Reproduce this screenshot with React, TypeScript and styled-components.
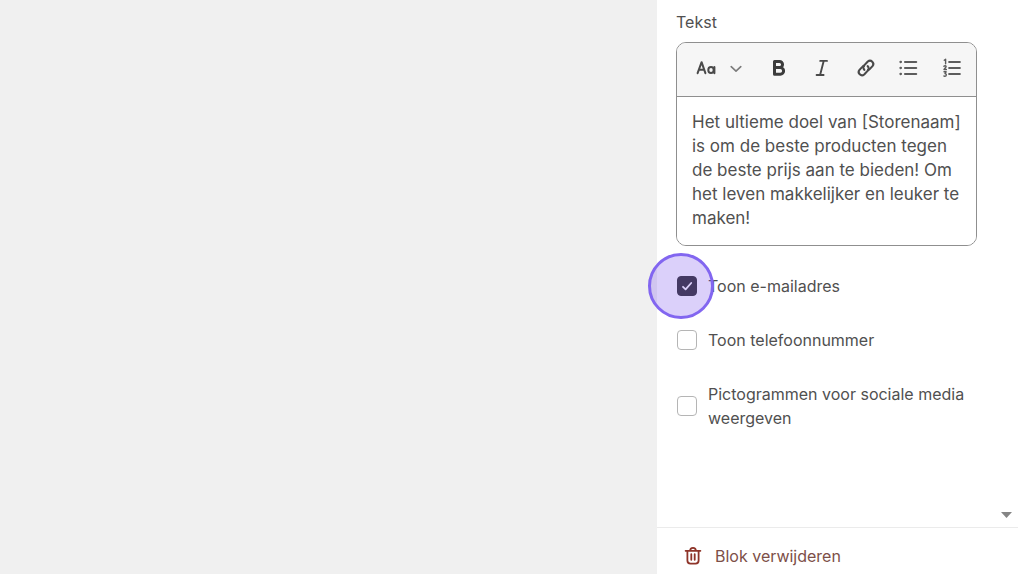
import React from "react";
import styled, { createGlobalStyle } from "styled-components";

const GlobalStyle = createGlobalStyle`
  *, *::before, *::after { box-sizing: border-box; }
  body {
    margin: 0;
    background: #ffffff;
    color: #505050;
    font-family: Inter, "Liberation Sans", sans-serif;
    font-size: 16px;
    line-height: 24px;
  }
  button, textarea, input { font: inherit; color: inherit; }
`;

const Page = styled.div`
  display: flex;
  min-height: 100vh;
  padding: 0 6px 8px 0;
`;

const Preview = styled.main`
  flex: 1;
  background: #f0f0f0;
`;

const Panel = styled.aside`
  flex: 0 0 361px;
  display: flex;
  flex-direction: column;
  background: #ffffff;
`;

const Settings = styled.div`
  flex: 1;
  padding: 10px 41px 0 19px;
`;

const FieldLabel = styled.label`
  display: block;
  margin-bottom: 8px;
`;

const Editor = styled.div`
  border: 1px solid #8f8f8f;
  border-radius: 10px;
  overflow: hidden;
`;

const Toolbar = styled.div`
  display: flex;
  align-items: center;
  justify-content: space-between;
  height: 54px;
  padding: 0 14px 4px 19px;
  background: #f6f6f6;
  border-bottom: 1px solid #8f8f8f;
`;

const ToolButton = styled.button<{ $wide?: boolean }>`
  display: flex;
  align-items: center;
  gap: 14px;
  width: ${(p) => (p.$wide ? "50px" : "20px")};
  padding: 0;
  border: 0;
  background: none;
  color: #4a4a4a;

  svg { display: block; flex: none; }
`;

const EditorText = styled.textarea`
  display: block;
  width: 100%;
  height: 148px;
  padding: 13px 12px 14px 15px;
  border: 0;
  outline: 0;
  resize: none;
  overflow: hidden;
  background: #ffffff;
  font-size: 17px;
`;

const Options = styled.div`
  display: flex;
  flex-direction: column;
  gap: 30px;
  margin-top: 28px;
`;

const Option = styled.label`
  display: flex;
  align-items: center;
  gap: 11px;
  padding-left: 1px;
`;

const BoxHolder = styled.span`
  position: relative;
  display: flex;
  flex: none;
`;

const Checkbox = styled.input`
  appearance: none;
  width: 20px;
  height: 20px;
  margin: 0;
  border: 1px solid #b5b5b5;
  border-radius: 4px;
  background: #ffffff;

  &:checked {
    border-color: #363636;
    background: #363636;
  }
`;

const Tick = styled.svg`
  position: absolute;
  inset: 0;
  pointer-events: none;
`;

const Highlight = styled.span`
  position: absolute;
  top: -23px;
  left: -29px;
  width: 66px;
  height: 66px;
  border: 3px solid #8266f0;
  border-radius: 50%;
  background: rgba(112, 68, 235, 0.25);
  pointer-events: none;
`;

const ScrollHint = styled.div`
  display: flex;
  justify-content: flex-end;
  padding: 0 6px 9px 0;
`;

const Footer = styled.footer`
  padding: 16px 27px 6px;
  border-top: 1px solid #ebebeb;
`;

const DeleteButton = styled.button`
  display: flex;
  align-items: center;
  gap: 13px;
  padding: 0;
  border: 0;
  background: none;
  color: #7d4f48;

  svg { color: #8e3429; }
`;

const stroke = {
  fill: "none",
  stroke: "currentColor",
  strokeLinecap: "round" as const,
  strokeLinejoin: "round" as const,
};

const FormatIcon = () => (
  <svg width="20" height="20" viewBox="0 0 20 20" {...stroke} strokeWidth="2" aria-hidden="true">
    <path d="M1.6 15.2 5.6 4.2 9.4 15.2M3 11.8h5" />
    <ellipse cx="15" cy="12" rx="2.700" ry="3.1" />
    <path d="M18.400 8.900v6.300" />
  </svg>
);

const ChevronIcon = () => (
  <svg width="12" height="20" viewBox="0 0 12 20" {...stroke} stroke="#7c7c7c" strokeWidth="1.6" aria-hidden="true">
    <path d="m1.200 8.600 4.800 4.600 4.800-4.600" />
  </svg>
);

const BoldIcon = () => (
  <svg width="20" height="20" viewBox="0 0 20 20" {...stroke} stroke="#3c3c3c" strokeWidth="3" aria-hidden="true">
    <path d="M5.500 3.500h5a3.050 3.050 0 0 1 0 6.100h-5zM5.500 9.600h5.800a3.300 3.300 0 0 1 0 6.600H5.500z" />
  </svg>
);

const ItalicIcon = () => (
  <svg width="20" height="20" viewBox="0 0 20 20" {...stroke} strokeWidth="1.9" aria-hidden="true">
    <path d="M8.200 2.900h6.800M4.600 17h7M11.700 2.900 8.100 17" />
  </svg>
);

const LinkIcon = () => (
  <svg width="20" height="20" viewBox="0 0 20 20" {...stroke} strokeWidth="2.100" aria-hidden="true">
    <path d="M8.400 11.900a3.200 3.200 0 0 1-.2-4.500l3.600-3.900a3.300 3.300 0 0 1 4.700 4.600l-2.800 3a3.200 3.200 0 0 1-1.700 1" />
    <path d="M11.600 8.100a3.200 3.200 0 0 1 .2 4.500l-3.600 3.900a3.300 3.300 0 0 1-4.700-4.600l2.800-3a3.200 3.200 0 0 1 1.700-1" />
  </svg>
);

const BulletIcon = () => (
  <svg width="20" height="20" viewBox="0 0 20 20" {...stroke} stroke="#5c5c5c" strokeWidth="2.100" aria-hidden="true">
    <path d="M6 4h11.200M6 10h11.200M6 16h11.200" />
    <path d="M1.500 4h.4M1.500 10h.4M1.500 16h.4" strokeWidth="2.300" />
  </svg>
);

const NumberedIcon = () => (
  <svg width="20" height="20" viewBox="0 0 20 20" {...stroke} stroke="#5c5c5c" strokeWidth="2.200" aria-hidden="true">
    <path d="M7.200 4h10.600M7.200 10h10.600M7.200 16h10.600" />
    <path
      d="M2.200 2.200 3.600 1.200v4.600M1.900 8.300c1.200-1.200 2.900-.2 1.900 1L2 11.500h2.400M2 13.800h2.100L3 15.600c1.900.1 1.600 2.700-.1 2.700L1.900 18"
      strokeWidth="1.400"
    />
  </svg>
);

const TrashIcon = () => (
  <svg width="18" height="20" viewBox="0 0 18 20" {...stroke} strokeWidth="1.800" aria-hidden="true">
    <path d="M1.600 4.800h14.800M6.200 4.600a2.800 2.800 0 0 1 5.600 0" />
    <path d="M3.400 5v9.600a3 3 0 0 0 3 3h5.200a3 3 0 0 0 3-3V5M7.300 8.200v5.600M10.700 8.200v5.600" />
  </svg>
);

const tools = [
  { name: "Vet", Icon: BoldIcon },
  { name: "Cursief", Icon: ItalicIcon },
  { name: "Link", Icon: LinkIcon },
  { name: "Opsomming", Icon: BulletIcon },
  { name: "Genummerde lijst", Icon: NumberedIcon },
];

const options = [
  { label: "Toon e-mailadres", checked: true, highlighted: true },
  { label: "Toon telefoonnummer", checked: false, highlighted: false },
  { label: "Pictogrammen voor sociale media weergeven", checked: false, highlighted: false },
];

export default function App() {
  return (
    <>
      <GlobalStyle />
      <Page>
        <Preview />
        <Panel>
          <Settings>
            <FieldLabel htmlFor="tekst">Tekst</FieldLabel>
            <Editor>
              <Toolbar role="toolbar">
                <ToolButton type="button" aria-label="Opmaak" $wide>
                  <FormatIcon />
                  <ChevronIcon />
                </ToolButton>
                {tools.map(({ name, Icon }) => (
                  <ToolButton key={name} type="button" aria-label={name}>
                    <Icon />
                  </ToolButton>
                ))}
              </Toolbar>
              <EditorText
                id="tekst"
                spellCheck={false}
                defaultValue="Het ultieme doel van [Storenaam] is om de beste producten tegen de beste prijs aan te bieden! Om het leven makkelijker en leuker te maken!"
              />
            </Editor>
            <Options>
              {options.map(({ label, checked, highlighted }) => (
                <Option key={label}>
                  <BoxHolder>
                    <Checkbox type="checkbox" defaultChecked={checked} />
                    {checked && (
                      <Tick width="20" height="20" viewBox="0 0 20 20" {...stroke} stroke="#ffffff" strokeWidth="1.8">
                        <path d="m6 10.800 2.600 2.600 5.600-6.400" />
                      </Tick>
                    )}
                    {highlighted && <Highlight />}
                  </BoxHolder>
                  <span>{label}</span>
                </Option>
              ))}
            </Options>
          </Settings>
          <ScrollHint>
            <svg width="11" height="6" viewBox="0 0 11 6" fill="#858585" aria-hidden="true">
              <path d="M0 0h11L5.500 6z" />
            </svg>
          </ScrollHint>
          <Footer>
            <DeleteButton type="button">
              <TrashIcon />
              Blok verwijderen
            </DeleteButton>
          </Footer>
        </Panel>
      </Page>
    </>
  );
}
